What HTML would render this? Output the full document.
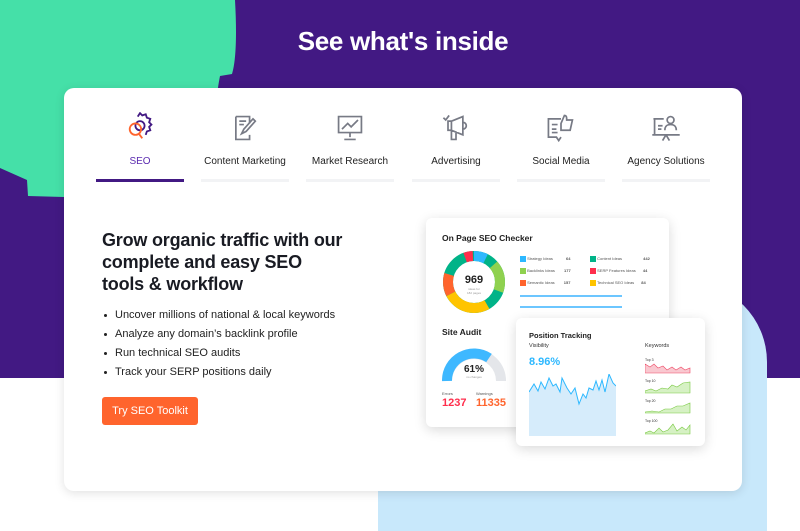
<!DOCTYPE html>
<html><head><style>
*{margin:0;padding:0;box-sizing:border-box}
body{width:800px;height:531px;overflow:hidden;position:relative;background:#fff;font-family:"Liberation Sans",sans-serif}
.abs{position:absolute}
.card{left:64px;top:88px;width:678px;height:403px;background:#fff;border-radius:10px;box-shadow:0 2px 10px rgba(0,0,0,.12)}
.tab{position:absolute;top:0;width:88px;text-align:center;font-size:10px;color:#222}
.tab .bar{position:absolute;left:0;top:91px;width:88px;height:3px;background:#f2f3f5}
.tab span{position:absolute;left:-20px;right:-20px;top:68px}
.tab svg{position:absolute;left:28px;top:24px}
h2{font-size:18px;line-height:22px;font-weight:700;color:#191b23;letter-spacing:-.2px}
ul{list-style:none;font-size:11px;color:#222}
ul li{height:19px;position:relative;padding-left:12px}
ul li:before{content:"";position:absolute;left:1px;top:5px;width:3px;height:3px;border-radius:50%;background:#222}
.sm{font-size:4px;color:#555}
.panel{background:#fff;border-radius:6px;box-shadow:0 3px 12px rgba(0,0,0,.15)}
</style></head><body>
<div class="abs" style="left:0;top:0;width:800px;height:378px;background:#421983"></div>
<svg class="abs" style="left:0;top:0" width="240" height="200"><path d="M0 0H235C237 35 236 62 232 74L220 76C215 100 212 150 212 196L64 197 28 196 27 180 0 168Z" fill="#45e0a8"/></svg>
<div class="abs" style="left:378px;top:282px;width:389px;height:249px;background:#c8e8fb;border-radius:0 80px 0 0"></div>
<div class="abs" style="left:0;top:26px;width:806px;text-align:center;color:#fff;font-weight:700;font-size:26px;letter-spacing:-.3px">See what's inside</div>
<div class="abs card">
 <div class="tab" style="left:32px;color:#5b2bb0"><svg width="32" height="32" viewBox="0 0 28 28" fill="none" stroke-width="1.6"><path d="M12 4l2-3 2 2 3-1 1 3 3 1-1 3 2 2-2 2 1 3-3 1-1 3" stroke="#421983"/><circle cx="14" cy="12" r="4" stroke="#421983"/><circle cx="10" cy="15" r="5" stroke="#ff642d"/><path d="M13 19l3 4" stroke="#ff642d"/></svg><span>SEO</span><div class="bar" style="background:#421983"></div></div>
 <div class="tab" style="left:137px"><svg width="32" height="32" viewBox="0 0 28 28" fill="none" stroke="#777a85" stroke-width="1.5"><path d="M6 4h12v6M6 4v20h12v-4"/><path d="M9 8h6M9 11h4M11 19l2-4 8-9 2 2-8 9z"/></svg><span>Content Marketing</span><div class="bar"></div></div>
 <div class="tab" style="left:242px"><svg width="32" height="32" viewBox="0 0 28 28" fill="none" stroke="#777a85" stroke-width="1.5"><path d="M4 4h20v14H4zM14 18v4M9 24h10M7 15l5-5 3 3 6-6"/></svg><span>Market Research</span><div class="bar"></div></div>
 <div class="tab" style="left:348px"><svg width="32" height="32" viewBox="0 0 28 28" fill="none" stroke="#777a85" stroke-width="1.5"><path d="M3 5l2 2 3-4M10 8l10-4v16l-10-4zM20 9a3 3 0 010 6M10 8H7v8h3M10 16v8h4v-7"/></svg><span>Advertising</span><div class="bar"></div></div>
 <div class="tab" style="left:453px"><svg width="32" height="32" viewBox="0 0 28 28" fill="none" stroke="#777a85" stroke-width="1.5"><path d="M14 6H3v16h7l2 3 2-3M6 11h5M6 15h4M6 18h5M14 10l3-7c2 0 2 2 2 4h5l-2 9h-8z"/></svg><span>Social Media</span><div class="bar"></div></div>
 <div class="tab" style="left:558px"><svg width="32" height="32" viewBox="0 0 28 28" fill="none" stroke="#777a85" stroke-width="1.5"><circle cx="18" cy="7" r="3"/><path d="M13 16c0-4 2-5 5-5s5 1 5 5M3 6h9M4 6v14h20M2 20h24M14 20l-3 5M14 20l3 5M7 12h4M7 15h3"/></svg><span>Agency Solutions</span><div class="bar"></div></div>

 <h2 class="abs" style="left:38px;top:141px;width:290px">Grow organic traffic with our<br>complete and easy SEO<br>tools &amp; workflow</h2>
 <ul class="abs" style="left:39px;top:221px"><li>Uncover millions of national &amp; local keywords</li><li>Analyze any domain’s backlink profile</li><li>Run technical SEO audits</li><li>Track your SERP positions daily</li></ul>
 <div class="abs" style="left:38px;top:309px;width:96px;height:28px;background:#ff642d;border-radius:3px;color:#fff;font-size:11px;line-height:28px;text-align:center;white-space:nowrap">Try SEO Toolkit</div>

 <div class="abs panel" style="left:362px;top:130px;width:243px;height:209px">
  <div class="abs" style="left:16px;top:15px;font-size:8.5px;font-weight:700;color:#222">On Page SEO Checker</div>
  <svg class="abs" style="left:16px;top:32px" width="64" height="64" viewBox="0 0 64 64"><g fill="none" stroke-width="10">
   <circle cx="32" cy="32" r="26" stroke="#00b388" stroke-dasharray="163.4" />
   <circle cx="32" cy="32" r="26" stroke="#ff642d" stroke-dasharray="0 110 20 100" transform="rotate(-90 32 32)"/>
   <circle cx="32" cy="32" r="26" stroke="#ffc400" stroke-dasharray="0 68 42 100" transform="rotate(-90 32 32)"/>
   <circle cx="32" cy="32" r="26" stroke="#8fd14f" stroke-dasharray="0 22 28 200" transform="rotate(-90 32 32)"/>
   <circle cx="32" cy="32" r="26" stroke="#2db8ff" stroke-dasharray="0 0 12 200" transform="rotate(-90 32 32)"/>
   <circle cx="32" cy="32" r="26" stroke="#ff2e4c" stroke-dasharray="8 200" transform="rotate(-110 32 32)"/></g>
   <text x="32" y="33" text-anchor="middle" font-size="11" font-weight="700" fill="#222" font-family="Liberation Sans">969</text>
   <text x="32" y="40" text-anchor="middle" font-size="3" fill="#999" font-family="Liberation Sans">ideas for</text>
   <text x="32" y="44" text-anchor="middle" font-size="3" fill="#999" font-family="Liberation Sans">182 pages</text></svg>
  <div class="abs sm" style="left:94px;top:35px;line-height:12px">
   <div><i style="display:inline-block;width:6px;height:6px;background:#2db8ff;vertical-align:middle"></i> Strategy Ideas <b style="margin-left:12px">64</b></div>
   <div><i style="display:inline-block;width:6px;height:6px;background:#8fd14f;vertical-align:middle"></i> Backlinks Ideas <b style="margin-left:8px">177</b></div>
   <div><i style="display:inline-block;width:6px;height:6px;background:#ff642d;vertical-align:middle"></i> Semantic Ideas <b style="margin-left:8px">157</b></div></div>
  <div class="abs sm" style="left:164px;top:35px;line-height:12px">
   <div><i style="display:inline-block;width:6px;height:6px;background:#00b388;vertical-align:middle"></i> Content Ideas <b style="margin-left:20px">442</b></div>
   <div><i style="display:inline-block;width:6px;height:6px;background:#ff2e4c;vertical-align:middle"></i> SERP Features Ideas <b style="margin-left:6px">44</b></div>
   <div><i style="display:inline-block;width:6px;height:6px;background:#ffc400;vertical-align:middle"></i> Technical SEO Ideas <b style="margin-left:6px">84</b></div></div>
  <div class="abs" style="left:94px;top:77px;width:102px;height:2px;background:#6cc6ff"></div>
  <div class="abs" style="left:94px;top:88px;width:102px;height:2px;background:#6cc6ff"></div>
  <div class="abs" style="left:16px;top:109px;font-size:8.5px;font-weight:700;color:#222">Site Audit</div>
  <svg class="abs" style="left:16px;top:126px" width="64" height="38" viewBox="0 0 64 38"><path d="M5 37A27 27 0 0 1 59 37" fill="none" stroke="#e4e6ea" stroke-width="10"/><path d="M5 37A27 27 0 0 1 47 14" fill="none" stroke="#3eb8ff" stroke-width="10"/><text x="32" y="28" text-anchor="middle" font-size="10" font-weight="700" fill="#222" font-family="Liberation Sans">61%</text><text x="32" y="34" text-anchor="middle" font-size="3" fill="#999" font-family="Liberation Sans">no changes</text></svg>
  <div class="abs sm" style="left:16px;top:173px">Errors</div><div class="abs sm" style="left:50px;top:173px">Warnings</div>
  <div class="abs" style="left:16px;top:179px;font-size:11px;font-weight:700;color:#ff2e4c">1237</div>
  <div class="abs" style="left:50px;top:179px;font-size:11px;font-weight:700;color:#ff642d">11335</div>
 </div>
 <div class="abs panel" style="left:452px;top:230px;width:189px;height:128px">
  <div class="abs" style="left:13px;top:13px;font-size:7.5px;font-weight:700;color:#222">Position Tracking</div>
  <div class="abs" style="left:13px;top:25px;font-size:5.5px;color:#333">Visibility</div>
  <div class="abs" style="left:13px;top:38px;font-size:11px;font-weight:700;color:#2db8ff">8.96%</div>
  <div class="abs" style="left:129px;top:25px;font-size:5.5px;color:#333">Keywords</div>
  <svg class="abs" style="left:13px;top:56px" width="104" height="62" viewBox="0 0 104 62"><path d="M0 18L5 10 9 17 12 8 16 15 20 4 24 12 27 10 31 18 33 4 38 14 42 20 46 14 50 30 54 20 57 24 60 14 64 16 67 7 70 16 73 6 76 18 80 0 84 9 87 12V62H0Z" fill="#d6ecfb"/><path d="M0 18L5 10 9 17 12 8 16 15 20 4 24 12 27 10 31 18 33 4 38 14 42 20 46 14 50 30 54 20 57 24 60 14 64 16 67 7 70 16 73 6 76 18 80 0 84 9 87 12" fill="none" stroke="#2db8ff" stroke-width="1"/></svg>
  <div class="abs" style="left:100px;top:56px;width:17px;height:62px;background:#fff"></div>
  <svg class="abs" style="left:129px;top:40px" width="46" height="80" viewBox="0 0 46 80"><g font-size="3.5" font-family="Liberation Sans" fill="#333"><text x="0" y="3">Top 3</text><text x="0" y="24">Top 10</text><text x="0" y="44">Top 20</text><text x="0" y="64">Top 100</text></g>
  <path d="M0 6L5 9 9 6 13 10 18 8 22 12 27 9 31 12 36 9 40 12 45 10V15H0Z" fill="#f9c8d0" stroke="#ef4a66" stroke-width=".6"/>
  <path d="M0 33L6 31 11 33 17 30 23 31 27 27 32 29 38 25 45 24V35H0Z" fill="#d6f1c4" stroke="#7ac943" stroke-width=".6"/>
  <path d="M0 54L7 53 14 54 20 51 26 51 32 48 38 48 45 45V55H0Z" fill="#d6f1c4" stroke="#7ac943" stroke-width=".6"/>
  <path d="M0 75L5 73 9 75 14 70 18 74 23 72 28 66 32 73 37 69 41 72 45 67V76H0Z" fill="#d6f1c4" stroke="#7ac943" stroke-width=".6"/></svg>
 </div>
</div>
</body></html>
